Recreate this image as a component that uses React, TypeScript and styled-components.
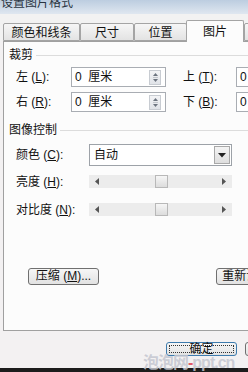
import React from "react";
import styled, { createGlobalStyle } from "styled-components";

const Global = createGlobalStyle`
  html, body { margin: 0; padding: 0; }
  body {
    width: 248px; height: 372px; overflow: hidden;
    background: #f3f1f2;
    font-family: "Liberation Sans", "Noto Sans CJK SC", sans-serif;
    font-size: 12px; color: #111;
  }
`;

const Dialog = styled.div`
  position: relative;
  width: 340px;
  height: 372px;
  display: flex;
  flex-direction: column;
  background: #f3f1f2;
`;

const TitleBar = styled.div`
  height: 14px;
  background: linear-gradient(#bccde0, #dfe7f0);
  overflow: hidden;
  line-height: 12px;
  color: #2a3440;
  padding-left: 1px;
  span { display: block; margin-top: -3px; }
`;

const TabStrip = styled.div`
  display: flex;
  align-items: flex-end;
  height: 27px;
  padding-left: 3px;
  background: #f2f2f2;
`;

const Tab = styled.div<{ $w: number; $active?: boolean }>`
  width: ${(p) => p.$w}px;
  height: ${(p) => (p.$active ? 22 : 18)}px;
  box-sizing: border-box;
  display: flex;
  align-items: center;
  justify-content: center;
  border: 1px solid #a4a4a4;
  border-bottom: ${(p) => (p.$active ? "none" : "1px solid #a4a4a4")};
  margin-left: ${(p) => (p.$active ? -1 : 0)}px;
  margin-bottom: ${(p) => (p.$active ? -1 : 0)}px;
  border-radius: 2px 2px 0 0;
  background: ${(p) =>
    p.$active ? "#fcfcfc" : "linear-gradient(#f6f6f6, #e3e3e3)"};
  position: relative;
  z-index: ${(p) => (p.$active ? 2 : 1)};
  font-size: 12px;
  line-height: 14px;
  padding-top: ${(p) => (p.$active ? 0 : 2)}px;
`;

const Panel = styled.div`
  margin-left: 3px;
  height: 290px;
  box-sizing: border-box;
  border: 1px solid #a0a0a0;
  background: #fcfcfc;
  display: flex;
  flex-direction: column;
`;

const GroupHeader = styled.div<{ $top: number }>`
  display: flex;
  align-items: center;
  gap: 3px;
  height: 14px;
  margin-top: ${(p) => p.$top}px;
  padding-left: 5px;
  line-height: 14px;
  &::after {
    content: "";
    flex: 1;
    height: 1px;
    background: #dcdcdc;
    margin-top: 1px;
  }
`;

const Row = styled.div<{ $top: number; $h: number }>`
  display: flex;
  align-items: center;
  height: ${(p) => p.$h}px;
  margin-top: ${(p) => p.$top}px;
  padding-left: 12px;
`;

const Label = styled.div<{ $w: number }>`
  width: ${(p) => p.$w}px;
  flex: none;
  line-height: 14px;
  white-space: nowrap;
  u { text-decoration: underline; }
`;

const SpinBox = styled.div<{ $w: number; $gap?: number }>`
  width: ${(p) => p.$w}px;
  height: 20px;
  box-sizing: border-box;
  border: 1px solid #a9adb3;
  background: #fff;
  display: flex;
  align-items: center;
  padding-left: 3px;
  margin-right: ${(p) => p.$gap ?? 0}px;
  flex: none;
  line-height: 14px;
`;

const SpinValue = styled.span`
  flex: 1;
  white-space: pre;
`;

const SpinButtons = styled.div`
  width: 12px;
  height: 15px;
  margin-right: 4px;
  box-sizing: border-box;
  border: 1px solid #c8ccd2;
  background: linear-gradient(#f3f4f6, #e0e3e8);
  display: flex;
  align-items: center;
  justify-content: center;
`;

const Combo = styled.div`
  width: 143px;
  height: 22px;
  box-sizing: border-box;
  border: 1px solid #9da2a8;
  background: #fff;
  display: flex;
  align-items: center;
  padding-left: 4px;
  line-height: 14px;
`;

const ComboText = styled.span`
  flex: 1;
`;

const ComboButton = styled.div`
  width: 16px;
  height: 18px;
  margin-right: 1px;
  box-sizing: border-box;
  border: 1px solid #a8a8a8;
  background: linear-gradient(#f4f4f4, #dedede);
  display: flex;
  align-items: center;
  justify-content: center;
`;

const Slider = styled.div`
  width: 143px;
  height: 13px;
  background: #ececec;
  display: flex;
  align-items: center;
  justify-content: space-between;
  padding: 0 6px;
  box-sizing: border-box;
  position: relative;
`;

const Thumb = styled.div`
  position: absolute;
  left: 66px;
  top: 0;
  width: 13px;
  height: 13px;
  box-sizing: border-box;
  border: 1px solid #b8b8b8;
  background: linear-gradient(#f6f6f6, #dcdcdc);
`;

const ButtonRow = styled.div`
  display: flex;
  margin-top: auto;
  margin-bottom: 45px;
  padding-left: 24px;
`;

const PushButton = styled.div<{ $w: number; $h?: number; $ml?: number; $focus?: boolean }>`
  width: ${(p) => p.$w}px;
  height: ${(p) => p.$h ?? 17}px;
  margin-left: ${(p) => p.$ml ?? 0}px;
  box-sizing: border-box;
  border: 1px solid ${(p) => (p.$focus ? "#3d7bad" : "#707070")};
  border-radius: 3px;
  background: linear-gradient(#f6f6f6, #e2e2e2);
  display: flex;
  align-items: center;
  justify-content: center;
  line-height: 13px;
  position: relative;
  flex: none;
  white-space: nowrap;
  ${(p) =>
    p.$focus
      ? `&::after { content: ""; position: absolute; inset: 2px; border: 1px dotted #333; }`
      : ""}
`;

const Footer = styled.div`
  display: flex;
  padding-left: 166px;
  margin-top: 11px;
  gap: 8px;
`;

const BottomBand = styled.div`
  margin-top: auto;
  height: 4px;
  background: #1c1c1c;
`;

const Watermark = styled.div`
  position: absolute;
  left: 143px;
  top: 356px;
  font-size: 16px;
  font-weight: bold;
  line-height: 14px;
  color: rgba(196, 198, 208, 0.85);
  letter-spacing: -1px;
  white-space: nowrap;
  span { color: rgba(220, 40, 60, 0.75); }
`;

const UpDown = () => (
  <svg width="7" height="11" viewBox="0 0 7 11">
    <path d="M3.5 1 L6 4 H1 Z" fill="#6d7580" />
    <path d="M3.5 10 L6 7 H1 Z" fill="#6d7580" />
    <line x1="1" y1="5.5" x2="6" y2="5.5" stroke="#c2c6cc" />
  </svg>
);

const Down = () => (
  <svg width="8" height="5" viewBox="0 0 8 5">
    <path d="M0 0 H8 L4 4.5 Z" fill="#222" />
  </svg>
);

const Arrow = ({ dir }: { dir: "l" | "r" }) => (
  <svg width="4" height="7" viewBox="0 0 4 7">
    {dir === "l" ? (
      <path d="M0 3.5 L4 0 V7 Z" fill="#555" />
    ) : (
      <path d="M4 3.5 L0 0 V7 Z" fill="#555" />
    )}
  </svg>
);

const Spin = ({ gap }: { gap?: number }) => (
  <SpinBox $w={95} $gap={gap}>
    <SpinValue>0  厘米</SpinValue>
    <SpinButtons>
      <UpDown />
    </SpinButtons>
  </SpinBox>
);

export default function App() {
  return (
    <>
      <Global />
      <Dialog>
        <TitleBar>
          <span>设置图片格式</span>
        </TitleBar>
        <TabStrip>
          <Tab $w={77}>颜色和线条</Tab>
          <Tab $w={54}>尺寸</Tab>
          <Tab $w={53}>位置</Tab>
          <Tab $w={58} $active>
            图片
          </Tab>
          <Tab $w={60}>文本框</Tab>
        </TabStrip>
        <Panel>
          <GroupHeader $top={6}>裁剪</GroupHeader>
          <Row $top={5} $h={20}>
            <Label $w={55}>
              左 (<u>L</u>):
            </Label>
            <Spin gap={17} />
            <Label $w={53}>
              上 (<u>T</u>):
            </Label>
            <Spin />
          </Row>
          <Row $top={5} $h={20}>
            <Label $w={55}>
              右 (<u>R</u>):
            </Label>
            <Spin gap={17} />
            <Label $w={53}>
              下 (<u>B</u>):
            </Label>
            <Spin />
          </Row>
          <GroupHeader $top={11}>图像控制</GroupHeader>
          <Row $top={7} $h={22}>
            <Label $w={73}>
              颜色 (<u>C</u>):
            </Label>
            <Combo>
              <ComboText>自动</ComboText>
              <ComboButton>
                <Down />
              </ComboButton>
            </Combo>
          </Row>
          <Row $top={9} $h={13}>
            <Label $w={73}>
              亮度 (<u>H</u>):
            </Label>
            <Slider>
              <Arrow dir="l" />
              <Thumb />
              <Arrow dir="r" />
            </Slider>
          </Row>
          <Row $top={15} $h={13}>
            <Label $w={73}>
              对比度 (<u>N</u>):
            </Label>
            <Slider>
              <Arrow dir="l" />
              <Thumb />
              <Arrow dir="r" />
            </Slider>
          </Row>
          <ButtonRow>
            <PushButton $w={71}>
              压缩 (<u>M</u>)...
            </PushButton>
            <PushButton $w={80} $ml={117}>
              重新设置 (<u>S</u>)
            </PushButton>
          </ButtonRow>
        </Panel>
        <Footer>
          <PushButton $w={71} $h={14} $focus>
            确定
          </PushButton>
          <PushButton $w={71} $h={14}>
            取消
          </PushButton>
        </Footer>
        <BottomBand />
        <Watermark>
          泡泡网<span>-</span>ppt.cn
        </Watermark>
      </Dialog>
    </>
  );
}
